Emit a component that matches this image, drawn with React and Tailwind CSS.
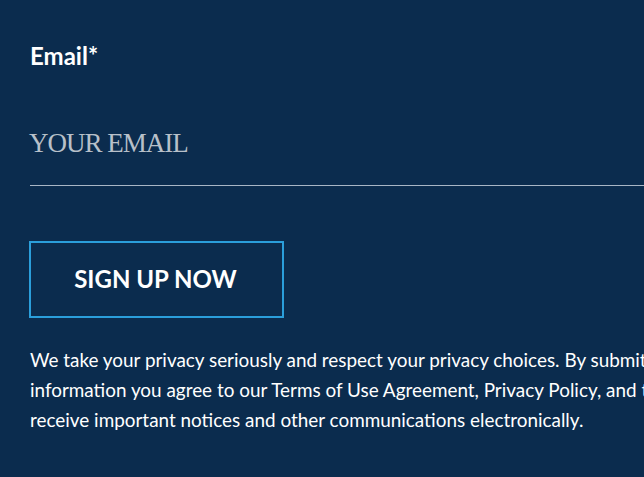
export default function App() {
  return (
    <div className="w-[644px] h-[477px] overflow-hidden bg-[#0b2c4e] text-white" style={{ fontFamily: "Lato, 'Liberation Sans', sans-serif" }}>
      <div className="w-[1000px] pl-[30px] pt-[42px]">
        <div className="text-[24px] font-bold leading-[1.2]">Email*</div>
        <div className="mt-[56px] w-[970px] border-b border-[#a8b6c5] pb-[26px]">
          <div className="-ml-px text-[27px] leading-[32px] tracking-[-1px] text-[#b8c0c9]" style={{ fontFamily: "'Liberation Serif', serif" }}>
            YOUR EMAIL
          </div>
        </div>
        <div className="-ml-px mt-[55px] flex h-[77px] w-[255px] items-center justify-center border-2 border-[#2b9fdb] text-[24px] font-bold">
          <span className="-ml-[2px]">SIGN UP NOW</span>
        </div>
        <p className="mt-[27px] whitespace-nowrap text-[18.9px] leading-[30px]">
          We take your privacy seriously and respect your privacy choices. By submitting your
          <br />
          information you agree to our Terms of Use Agreement, Privacy Policy, and to
          <br />
          receive important notices and other communications electronically.
        </p>
      </div>
    </div>
  );
}
